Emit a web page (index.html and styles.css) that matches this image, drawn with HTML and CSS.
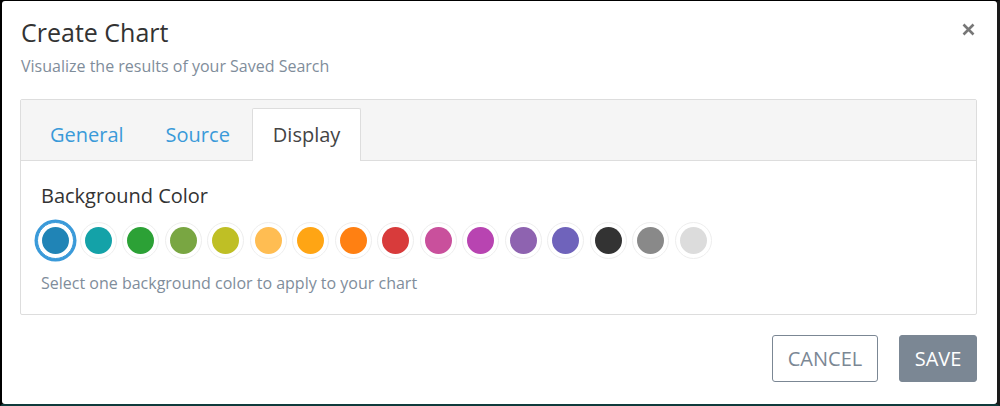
FILE: index.html
```html
<!DOCTYPE html>
<html>
<head>
<meta charset="utf-8">
<link rel="stylesheet" href="styles.css">
</head>
<body>
<div class="screen">
  <div class="modal">
    <div class="modal-header">
      <div class="titles">
        <h1 class="title">Create Chart</h1>
        <p class="subtitle">Visualize the results of your Saved Search</p>
      </div>
      <button class="close" aria-label="Close">
        <svg width="13" height="13" viewBox="0 0 13 13"><path d="M1.5 1.5 L11.5 11.5 M11.5 1.5 L1.5 11.5" stroke="#777" stroke-width="2.6" stroke-linecap="butt"/></svg>
      </button>
    </div>
    <div class="panel">
      <div class="tabs">
        <div class="tab">General</div>
        <div class="tab">Source</div>
        <div class="tab active">Display</div>
      </div>
      <div class="panel-body">
        <div class="label">Background Color</div>
        <div class="swatches">
          <span class="swatch selected"><i style="background:#2084b6"></i></span>
          <span class="swatch"><i style="background:#14a2a8"></i></span>
          <span class="swatch"><i style="background:#2ca136"></i></span>
          <span class="swatch"><i style="background:#79a642"></i></span>
          <span class="swatch"><i style="background:#bfbf25"></i></span>
          <span class="swatch"><i style="background:#ffbd52"></i></span>
          <span class="swatch"><i style="background:#ffa514"></i></span>
          <span class="swatch"><i style="background:#ff8012"></i></span>
          <span class="swatch"><i style="background:#d83b3b"></i></span>
          <span class="swatch"><i style="background:#c9509c"></i></span>
          <span class="swatch"><i style="background:#b844b1"></i></span>
          <span class="swatch"><i style="background:#8e63b0"></i></span>
          <span class="swatch"><i style="background:#6f63bb"></i></span>
          <span class="swatch"><i style="background:#333333"></i></span>
          <span class="swatch"><i style="background:#898989"></i></span>
          <span class="swatch"><i style="background:#dcdcdc"></i></span>
        </div>
        <p class="help">Select one background color to apply to your chart</p>
      </div>
    </div>
    <div class="footer">
      <button class="btn btn-cancel">CANCEL</button>
      <button class="btn btn-save">SAVE</button>
    </div>
  </div>
</div>
</body>
</html>
```
FILE: styles.css
```css
html, body {
  margin: 0;
  padding: 0;
  background: #000;
}
body {
  font-family: "Open Sans", "Liberation Sans", sans-serif;
  width: 1000px;
  height: 406px;
  overflow: hidden;
}
.screen {
  box-sizing: border-box;
  width: 1000px;
  height: 406px;
  border-top: 1px solid #000;
  border-left: 2px solid #000;
  border-right: 3px solid #1a1a1a;
  border-bottom: 2px solid #0f3a3b;
  background: #000;
}
.modal {
  box-sizing: border-box;
  height: 100%;
  background: #fff;
  border-radius: 3px;
  padding: 14px 20px 0 18px;
  display: flex;
  flex-direction: column;
}
.modal-header {
  display: flex;
  justify-content: space-between;
  align-items: flex-start;
}
.title {
  margin: 0 0 0 1px;
  font-size: 25px;
  font-weight: 400;
  line-height: 34px;
  color: #333;
}
.subtitle {
  margin: 7px 0 0 1px;
  font-size: 16px;
  line-height: 21px;
  color: #7f8d9b;
}
.close {
  border: 0;
  background: none;
  padding: 0;
  margin: 8px 2px 0 0;
  line-height: 0;
  cursor: pointer;
}
.panel {
  margin-top: 22px;
  border: 1px solid #ddd;
  border-radius: 2px;
}
.tabs {
  display: flex;
  gap: 2px;
  background: #f5f5f5;
  border-bottom: 1px solid #ddd;
  padding: 8px 9px 0;
  box-sizing: content-box;
  height: 52px;
}
.tab {
  font-size: 20px;
  line-height: 27px;
  padding: 12px 19px 12px;
  color: #3a9ad9;
  border: 1px solid transparent;
  border-bottom: 0;
  border-radius: 2px 2px 0 0;
  margin-bottom: -1px;
}
.tab.active {
  background: #fff;
  color: #444;
  border-color: #ddd;
  padding: 12px 20px 13px;
}
.panel-body {
  padding: 21px 20px 20px 15px;
}
.label {
  font-size: 20px;
  line-height: 27px;
  color: #333;
  margin-left: 5px;
}
.swatches {
  display: flex;
  gap: 5.5px;
  margin-top: 13px;
  padding-left: 1px;
}
.swatch {
  box-sizing: border-box;
  width: 37px;
  height: 37px;
  border-radius: 50%;
  border: 1px solid #eee;
  padding: 4px;
  background: #fff;
  display: block;
}
.swatch i {
  display: block;
  width: 27px;
  height: 27px;
  border-radius: 50%;
}
.swatch.selected {
  border-color: #3a9ad9;
  box-shadow: 0 0 0 2.5px #3a9ad9;
}
.help {
  margin: 13px 0 0 5px;
  font-size: 16px;
  line-height: 22px;
  color: #7f8d9b;
}
.footer {
  display: flex;
  justify-content: flex-end;
  gap: 21px;
  margin-top: 20px;
}
.btn {
  font-family: "Open Sans", "Liberation Sans", sans-serif;
  font-size: 20px;
  height: 47px;
  border-radius: 3px;
  padding: 0 12px;
  cursor: pointer;
}
.btn-cancel {
  background: #fff;
  border: 1px solid #7b8794;
  color: #7b8794;
  width: 106px;
}
.btn-save {
  background: #7b8794;
  border: 1px solid #7b8794;
  color: #fff;
  width: 78px;
}
```
